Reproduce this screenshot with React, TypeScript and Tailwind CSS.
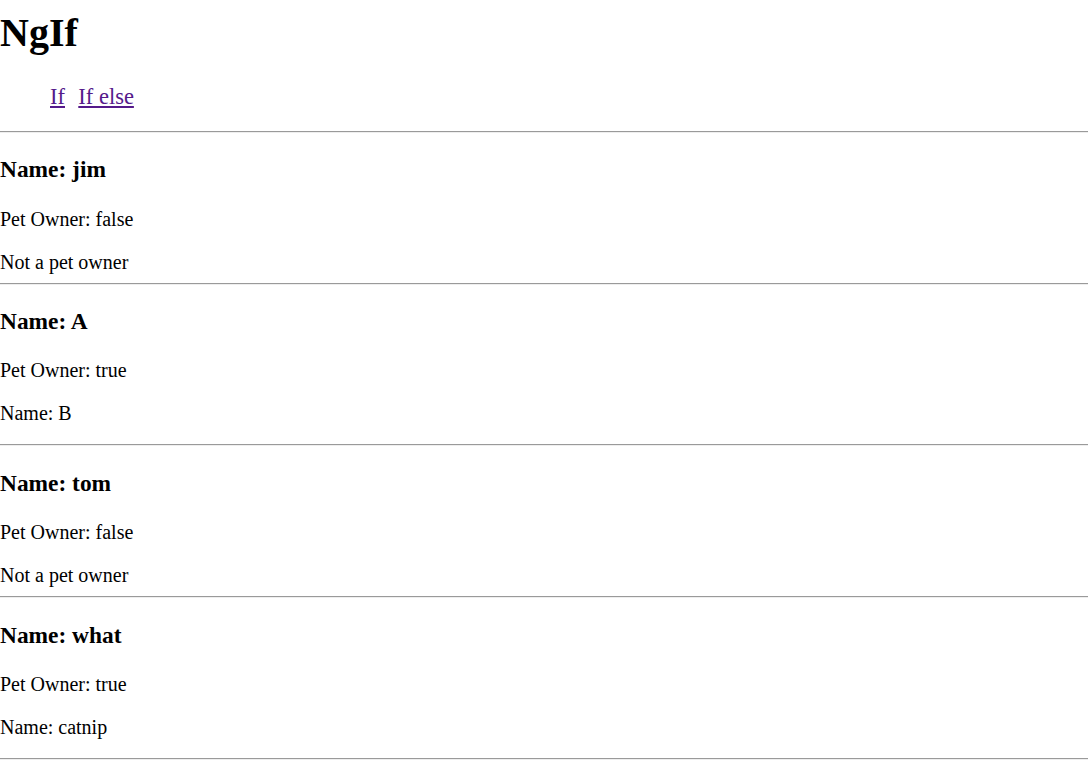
import React from 'react';

interface Person {
  name: string;
  petOwner: boolean;
  pet?: string;
}

const people: Person[] = [
  { name: 'jim', petOwner: false },
  { name: 'A', petOwner: true, pet: 'B' },
  { name: 'tom', petOwner: false },
  { name: 'what', petOwner: true, pet: 'catnip' },
];

const Rule = () => (
  <hr className="h-0 border-0 border-t border-b border-t-[#9a9a9a] border-b-[#eeeeee]" />
);

const App: React.FC = () => {
  return (
    <div className="font-['Liberation_Serif','Times_New_Roman',serif] text-black bg-white min-h-screen pt-[10px]">
      <h1 className="text-[40px] leading-[46px] font-bold">NgIf</h1>
      <ul className="mt-[26.8px] pl-[50px] flex gap-[13.3px] text-[22.5px] leading-[27px]">
        <li>
          <a href="#" className="underline text-[#551a8b]">If</a>
        </li>
        <li>
          <a href="#" className="underline text-[#551a8b]">If else</a>
        </li>
      </ul>
      <div className="mt-[21px]">
        <Rule />
      </div>
      {people.map((p) => (
        <div key={p.name}>
          <h3 className="mt-[23.4px] text-[23.4px] leading-[27px] font-bold">Name: {p.name}</h3>
          <p className="mt-[23.4px] text-[20px] leading-[24px]">Pet Owner: {String(p.petOwner)}</p>
          {p.petOwner ? (
            <>
              <p className="mt-[19px] text-[20px] leading-[24px]">Name: {p.pet}</p>
              <div className="mt-[19px]">
                <Rule />
              </div>
            </>
          ) : (
            <>
              <div className="mt-[19px] text-[20px] leading-[24px]">Not a pet owner</div>
              <div className="mt-[9px]">
                <Rule />
              </div>
            </>
          )}
        </div>
      ))}
    </div>
  );
};

export default App;
